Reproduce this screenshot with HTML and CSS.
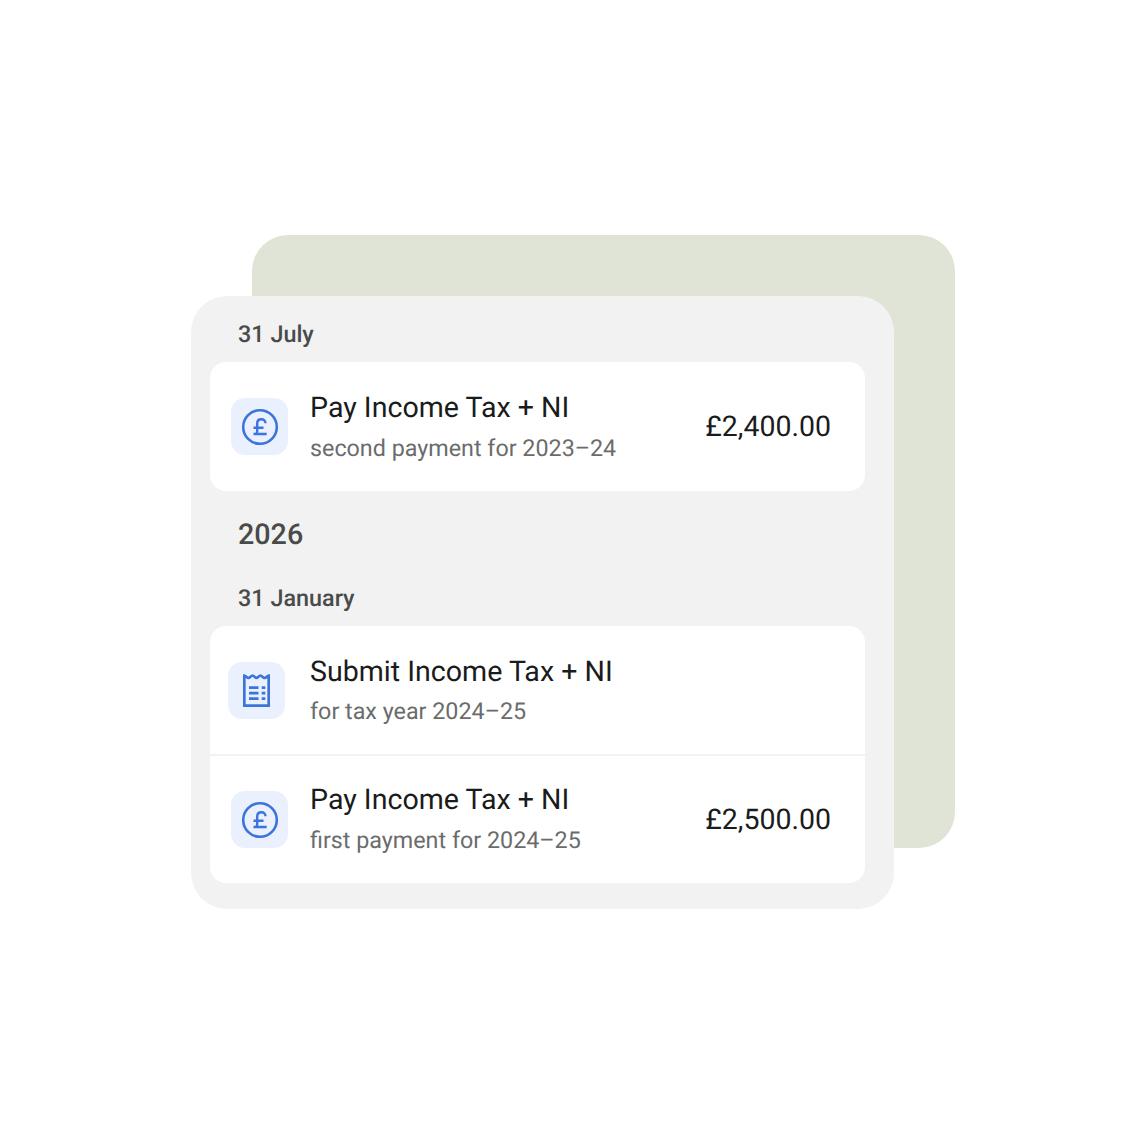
FILE: index.html
```html
<!DOCTYPE html>
<html lang="en">
<head>
    <meta charset="UTF-8">
    <meta name="viewport" content="width=device-width, initial-scale=1.0">
    <title>Tax deadlines</title>
    <link rel="stylesheet" href="styles.css">
</head>
<body>
    <div class="scene">
        <div class="backdrop"></div>
        <div class="panel">
            <div class="date-label date-first">31 July</div>
            <div class="card">
                <div class="row">
                    <div class="icon-box">
                        <svg width="38" height="38" viewBox="0 0 38 38" fill="none">
                            <circle cx="19" cy="19" r="16.8" stroke="#3b74dc" stroke-width="2.6"/>
                            <path d="M24.500 15.200c0-2.400-1.700-3.900-4-3.900-2.500 0-4.300 1.600-4.300 4.200v8c0 1-.6 2-1.500 2.500M12.500 26h13.200M12.500 19.800h10" stroke="#3b74dc" stroke-width="2.400"/>
                        </svg>
                    </div>
                    <div class="row-text">
                        <div class="row-title">Pay Income Tax + NI</div>
                        <div class="row-sub">second payment for 2023–24</div>
                    </div>
                    <div class="row-amount">£2,400.00</div>
                </div>
            </div>
            <div class="year-label">2026</div>
            <div class="date-label">31 January</div>
            <div class="card">
                <div class="row row-divided">
                    <div class="icon-box icon-box-left">
                        <svg class="receipt" width="27" height="33" viewBox="0 0 27 33" fill="none">
                            <path d="M1.300 1.500v30.200h24.400V1.500c-1.400 0-2.500 2.400-4.100 2.400s-2.700-2.400-4.100-2.400-2.700 2.400-4 2.400-2.700-2.400-4-2.400-2.700 2.400-4.100 2.400-2.700-2.400-4.100-2.400z" stroke="#3b74dc" stroke-width="2.700"/>
                            <path d="M6 13.600h9.500M6 19.200h9.500M6 24.700h9.500M18.700 13.600h3.600M18.700 19.200h3.600M18.700 24.700h3.600" stroke="#3b74dc" stroke-width="2.700"/>
                        </svg>
                    </div>
                    <div class="row-text">
                        <div class="row-title row-title-tight">Submit Income Tax + NI</div>
                        <div class="row-sub">for tax year 2024–25</div>
                    </div>
                </div>
                <div class="row row-last">
                    <div class="icon-box">
                        <svg width="38" height="38" viewBox="0 0 38 38" fill="none">
                            <circle cx="19" cy="19" r="16.8" stroke="#3b74dc" stroke-width="2.6"/>
                            <path d="M24.500 15.200c0-2.400-1.700-3.900-4-3.900-2.500 0-4.300 1.600-4.300 4.200v8c0 1-.6 2-1.500 2.500M12.500 26h13.200M12.500 19.800h10" stroke="#3b74dc" stroke-width="2.400"/>
                        </svg>
                    </div>
                    <div class="row-text">
                        <div class="row-title">Pay Income Tax + NI</div>
                        <div class="row-sub">first payment for 2024–25</div>
                    </div>
                    <div class="row-amount">£2,500.00</div>
                </div>
            </div>
        </div>
    </div>
</body>
</html>
```

FILE: styles.css
```css
body {
    margin: 0;
    background-color: #ffffff;
    font-family: "Roboto", "Liberation Sans", sans-serif;
    text-rendering: geometricPrecision;
}
.scene {
    position: relative;
    width: 703px;
    height: 613px;
    margin: 296px 0 0 191px;
}
/* green sheet behind the panel */
.backdrop {
    position: absolute;
    left: 61px;
    top: -61px;
    width: 703px;
    height: 613px;
    background-color: #e0e4d6;
    border-radius: 36px;
}
.panel {
    position: relative;
    box-sizing: border-box;
    height: 613px;
    padding: 0 29px 0 19px;
    background-color: #f2f2f2;
    border-radius: 36px;
}
.date-label {
    height: 28px;
    margin: 0 0 14px 28px;
    color: #494b4b;
    font-size: 23.4px;
    font-weight: 500;
    line-height: 28px;
}
.date-first {
    padding-top: 24px;
}
.year-label {
    margin: 26px 0 31px 28px;
    color: #494b4b;
    font-size: 28.7px;
    font-weight: 500;
    line-height: 36px;
}
.card {
    background-color: #ffffff;
    border-radius: 16px;
}
.row {
    display: flex;
    align-items: center;
    box-sizing: border-box;
    height: 129px;
    padding: 0 34px 0 21px;
}
.row-divided {
    height: 130px;
    border-bottom: 2px solid #f2f2f2;
}
.row-last {
    height: 127px;
}
.row-last .row-text {
    padding-bottom: 4px;
}
.icon-box {
    display: flex;
    align-items: center;
    justify-content: center;
    flex-shrink: 0;
    width: 57px;
    height: 57px;
    margin-right: 22px;
    background-color: #eaf0fd;
    border-radius: 14px;
}
.icon-box-left {
    margin-left: -3px;
    margin-right: 25px;
}
.receipt {
    margin-top: 1px;
}
.row-text {
    flex: 1;
    padding-bottom: 2px;
}
.row-title {
    color: #1a1c1c;
    font-size: 28.6px;
    line-height: 36px;
    margin-bottom: 8px;
}
.row-title-tight {
    margin-bottom: 7px;
}
.row-sub {
    color: #6a6c6c;
    font-size: 23.3px;
    line-height: 30px;
}
.row-amount {
    color: #1a1c1c;
    font-size: 28.5px;
}
```
